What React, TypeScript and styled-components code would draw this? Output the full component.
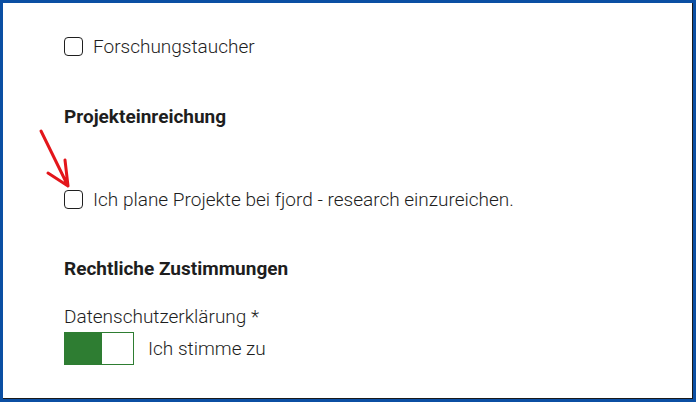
import React, { FC } from "react";
import styled, { createGlobalStyle } from "styled-components";

const GlobalStyle = createGlobalStyle`
  html, body {
    margin: 0;
    padding: 0;
    background: #ffffff;
  }
  body {
    font-family: Roboto, "Liberation Sans", Arial, sans-serif;
    color: #222222;
  }
`;

const Frame = styled.div`
  position: relative;
  width: 696px;
  height: 402px;
  box-sizing: border-box;
  border: 3px solid #0b4fa3;
  box-shadow: inset -1px -1px 0 #1a1a1a;
  background: #ffffff;
  padding: 31px 0 0 61px;
  display: flex;
  flex-direction: column;
  align-items: flex-start;
`;

const CheckRow = styled.label<{ $top: number }>`
  display: flex;
  align-items: center;
  gap: 10px;
  height: 24px;
  margin-top: ${(p) => p.$top}px;
  font-size: 19px;
  font-weight: 300;
  color: #1e1e1e;
  cursor: pointer;
`;

const Box = styled.span`
  width: 19px;
  height: 19px;
  box-sizing: border-box;
  border: 1.5px solid #1f1f1f;
  border-radius: 4px;
  background: #ffffff;
  flex-shrink: 0;
`;

const Heading = styled.div<{ $top: number }>`
  margin-top: ${(p) => p.$top}px;
  height: 24px;
  line-height: 24px;
  font-size: 19px;
  font-weight: 700;
  color: #1e1e1e;
`;

const FieldLabel = styled.div<{ $top: number }>`
  margin-top: ${(p) => p.$top}px;
  height: 24px;
  line-height: 24px;
  font-size: 19px;
  font-weight: 300;
  color: #1e1e1e;
`;

const ToggleRow = styled.div`
  margin-top: 3px;
  display: flex;
  align-items: center;
  gap: 14px;
  font-size: 19px;
  font-weight: 300;
  color: #1e1e1e;
`;

const Toggle = styled.div`
  width: 70px;
  height: 33px;
  box-sizing: border-box;
  border: 1px solid #2e7d32;
  display: flex;
  background: #ffffff;
`;

const ToggleKnob = styled.div`
  width: 37px;
  height: 100%;
  background: #2e7d32;
`;

const Arrow = styled.svg`
  position: absolute;
  left: 30px;
  top: 120px;
`;

const App: FC = () => {
  return (
    <>
      <GlobalStyle />
      <Frame>
        <CheckRow $top={0}>
          <Box />
          Forschungstaucher
        </CheckRow>
        <Heading $top={47}>Projekteinreichung</Heading>
        <CheckRow $top={58}>
          <Box />
          Ich plane Projekte bei fjord - research einzureichen.
        </CheckRow>
        <Heading $top={46}>Rechtliche Zustimmungen</Heading>
        <FieldLabel $top={24}>Datenschutzerklärung *</FieldLabel>
        <ToggleRow>
          <Toggle>
            <ToggleKnob />
          </Toggle>
          Ich stimme zu
        </ToggleRow>
        <Arrow width="45" height="72" viewBox="0 0 45 72">
          <path
            d="M8 8 L35 63 M15 50 L35 63 L32 37"
            fill="none"
            stroke="#e3161b"
            strokeWidth="3"
            strokeLinecap="round"
            strokeLinejoin="round"
          />
        </Arrow>
      </Frame>
    </>
  );
};

export default App;
